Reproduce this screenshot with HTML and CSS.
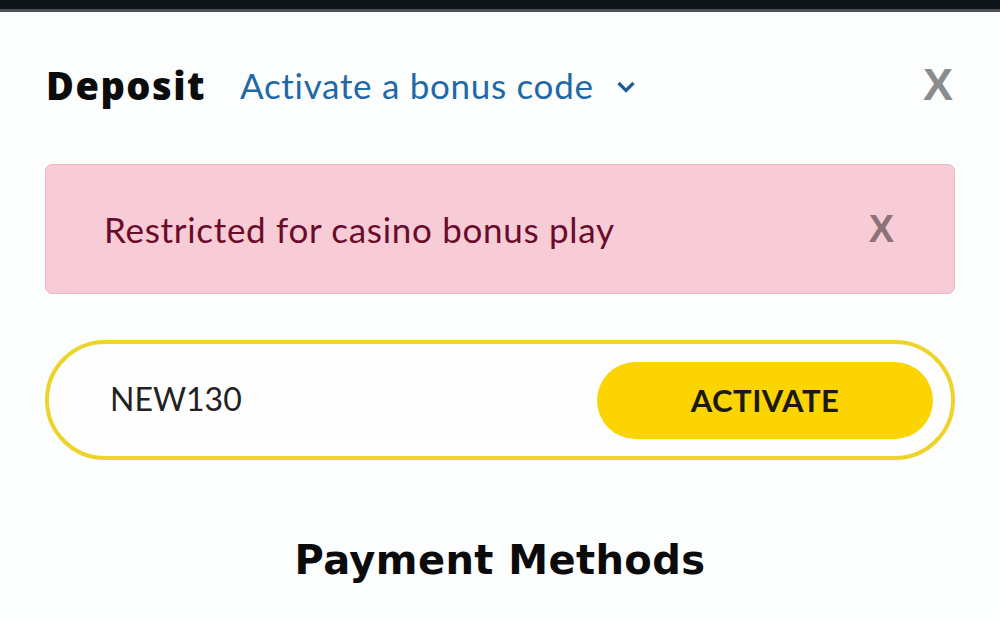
FILE: index.html
```html
<!DOCTYPE html>
<html>
<head>
<meta charset="utf-8">
<link rel="stylesheet" href="styles.css">
</head>
<body>
<div class="topbar"></div>
<div class="topline"></div>
<main class="page">
  <header class="head">
    <h1 class="title">Deposit</h1>
    <button class="bonus-toggle">Activate a bonus code
      <svg class="chev" width="20" height="12" viewBox="0 0 20 12"><path d="M2.5 2 L10 9.5 L17.5 2" fill="none" stroke="#1d5e9a" stroke-width="3.2"/></svg>
    </button>
    <span class="close">X</span>
  </header>
  <div class="alert">
    <span class="alert-text">Restricted for casino bonus play</span>
    <span class="alert-close">X</span>
  </div>
  <div class="code-field">
    <span class="code-value">NEW130</span>
    <button class="activate">ACTIVATE</button>
  </div>
  <h2 class="pm">Payment Methods</h2>
</main>
</body>
</html>
```
FILE: styles.css
```css
html, body { margin: 0; padding: 0; }
body { background: #fcfdfd; width: 1000px; height: 621px; overflow: hidden; font-family: Lato, "Open Sans", sans-serif; }
.topbar { height: 9px; background: #10141b; }
.topline { height: 3px; background: #4d5058; }
.page { padding: 0 45px; }
.head { display: flex; align-items: center; height: 148px; margin-top: -1px; }
.title { margin: 0 0 0 1px; font-family: "Open Sans", sans-serif; font-weight: 800; font-size: 38px; color: #0c0c0c; letter-spacing: 1.5px; }
.bonus-toggle { background: none; border: 0; padding: 0; margin-left: 34px; display: flex; align-items: center; gap: 22px; font-family: Lato, sans-serif; font-size: 35px; color: #1e69a6; letter-spacing: 0.7px; }
.chev { margin-top: 4px; }
.close { margin-left: auto; margin-right: 2px; font-family: "Liberation Sans", Arial, sans-serif; font-weight: 700; font-size: 45px; color: #8b8b8b; }
.alert { height: 130px; box-sizing: border-box; margin-top: 5px; background: #f8ccd6; border: 1px solid #e9b6c2; border-radius: 7px; display: flex; align-items: center; padding: 0 60px 0 58px; }
.alert-text { font-family: Lato, sans-serif; font-size: 35px; color: #6a0b2b; letter-spacing: 0.7px; }
.alert-close { margin-left: auto; font-family: "Liberation Sans", Arial, sans-serif; font-weight: 700; font-size: 38px; color: #8e727a; }
.code-field { margin-top: 46px; height: 120px; box-sizing: border-box; border: 4px solid #eed42a; border-radius: 60px; display: flex; align-items: center; padding: 0 18px 0 61px; background: #fefefe; }
.code-value { font-family: Lato, sans-serif; font-size: 32px; color: #222; margin-top: -3px; }
.activate { margin-left: auto; width: 336px; height: 77px; border: 0; border-radius: 39px; background: #fbd402; font-family: Lato, sans-serif; font-weight: 700; font-size: 31px; color: #1c1a10; letter-spacing: 0.5px; }
.pm { margin: 77px 0 0; text-align: center; font-family: "DejaVu Sans", sans-serif; font-weight: 700; font-size: 40px; color: #0b0b0b; letter-spacing: 0.4px; }
```
